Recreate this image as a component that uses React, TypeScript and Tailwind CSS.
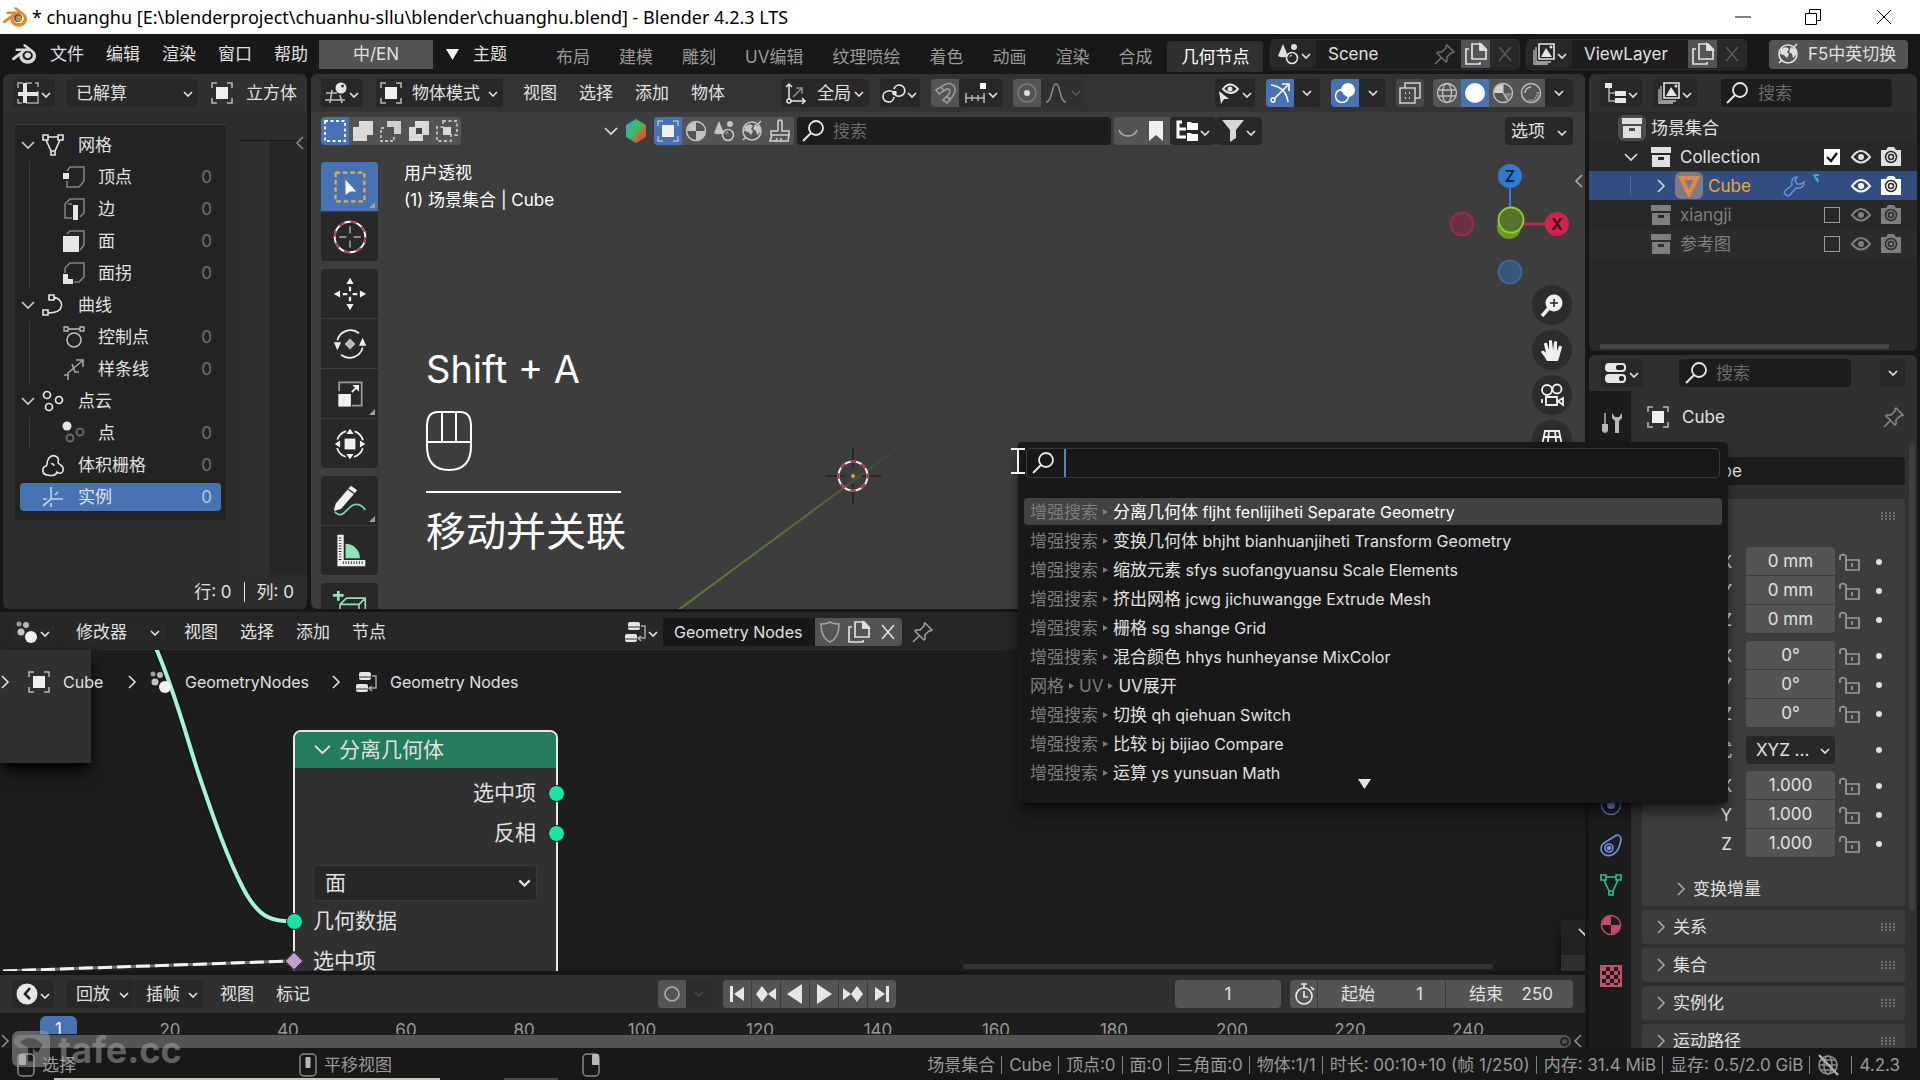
import React from "react";
import { SiBlender } from "react-icons/si";

const W = "#e6e6e6";

const ICONS: Record<string, React.ReactNode> = {
  sheet: (
    <g>
      <path d="M1 6V1h5M9 1h6M18 1h3v4M1 17v4h4M9 21h12V9" fill="none" stroke="#a8a8a8" strokeWidth="1.5" />
      <path d="M8 1v20M1 12h20" stroke={W} strokeWidth="4" />
    </g>
  ),
  object: (
    <g>
      <path d="M1 6V1h5M16 1h5v5M21 16v5h-5M6 21H1v-5" fill="none" stroke="#b8b8b8" strokeWidth="1.5" />
      <rect x="5" y="5" width="12" height="12" fill="#f0f0f0" />
    </g>
  ),
  view3d: (
    <g>
      <path d="M1 11h11M0 18h20M7 8l-2 13M15 13l2 8" fill="none" stroke="#bdbdbd" strokeWidth="1.6" />
      <circle cx="16" cy="6" r="5.5" fill={W} />
      <circle cx="17.500" cy="4" r="1.500" fill="#333" />
    </g>
  ),
  axes: (
    <g fill="none" stroke={W} strokeWidth="1.5">
      <path d="M4 17V2M1 5l3-3 3 3M6 19h14M17 16l3 3-3 3" />
      <circle cx="4" cy="19" r="2" />
      <path d="M8 15l8-8M11 6h6v6" stroke="#8f8f8f" />
    </g>
  ),
  pivot: (
    <g fill="none" stroke={W} strokeWidth="1.7">
      <path d="M11 7a5.500 5.500 0 1 1 6 7q-3 1-6-2M11 15a5.500 5.500 0 1 1-6-6q3-1 6 2" />
      <circle cx="11.500" cy="11" r="1.500" fill={W} />
    </g>
  ),
  magnet: (
    <path d="M2 8l8-5c5-3 11-1 11 5 0 5-4 9-8 13l-4-3c4-4 7-6 7-9 0-2-2-3-5-1l-6 4zM7 5l3 4M16 17l-4-3" fill="none" stroke="#9c9c9c" strokeWidth="1.600" />
  ),
  increment: (
    <g>
      <path d="M1 16h20M2 11v10M8 13v6M14 13v6M20 11v10" stroke="#b0b0b0" strokeWidth="1.6" />
      <rect x="16" y="1" width="6" height="6" fill="#fff" />
    </g>
  ),
  prop: (
    <g>
      <circle cx="11" cy="11" r="9" fill="none" stroke="#7a7a7a" strokeWidth="1.5" />
      <circle cx="11" cy="11" r="3" fill="#ddd" />
    </g>
  ),
  falloff: <path d="M1 20c7 0 5-18 10-18s3 18 10 18" fill="none" stroke="#8a8a8a" strokeWidth="1.6" />,
  eyecursor: (
    <g>
      <path d="M5 7q7-9 15 0q-7 8-15 0z" fill="none" stroke={W} strokeWidth="2" />
      <circle cx="12" cy="7" r="2.500" fill={W} />
      <path d="M1 9l2 13 3-5 5 0z" fill={W} />
    </g>
  ),
  gizmo: (
    <g fill="none" stroke="#fff" strokeWidth="1.6">
      <path d="M2 3q15 2 17 17M6 16L19 3M13 2h7v7" />
      <circle cx="4" cy="18" r="2" />
    </g>
  ),
  overlay: (
    <g>
      <circle cx="14" cy="8" r="7" fill="#fff" />
      <circle cx="8" cy="14" r="6.500" fill="none" stroke="#fff" strokeWidth="1.500" />
      <path d="M7.500 10a7 7 0 0 0 5 5" stroke="#4772b3" fill="none" strokeWidth="1.500" />
    </g>
  ),
  xray: (
    <g fill="none" stroke="#d0d0d0" strokeWidth="1.5">
      <path d="M6 6V1h15v15h-5" />
      <rect x="1" y="6" width="15" height="15" />
      <path d="M6 11h1M10 11h1M6 16h1M10 16h1" strokeWidth="2" />
    </g>
  ),
  wire: (
    <g fill="none" stroke="#bdbdbd" strokeWidth="1.4">
      <circle cx="11" cy="11" r="9.500" />
      <ellipse cx="11" cy="11" rx="4.500" ry="9.500" />
      <path d="M2 8h18M2 14h18" />
    </g>
  ),
  solid: <circle cx="11" cy="11" r="10" fill="#fff" />,
  matprev: (
    <g>
      <circle cx="11" cy="11" r="9.500" fill="none" stroke="#bdbdbd" strokeWidth="1.500" />
      <path d="M11 11V2a9 9 0 0 0-9 9z" fill="#cfcfcf" />
      <path d="M11 11h9l-6 8z" fill="#8a8a8a" />
      <path d="M11 2v9l5 7" stroke="#cfcfcf" fill="none" />
    </g>
  ),
  rendered: (
    <g fill="none" stroke="#bdbdbd" strokeWidth="1.500">
      <circle cx="11" cy="11" r="9.500" />
      <path d="M5 11a6 6 0 0 1 6-6" />
      <path d="M18 10l-1 5-4 4-5 0" strokeDasharray="2 1" strokeWidth="3" stroke="#8f8f8f" />
    </g>
  ),
  selNew: <path d="M1 1h20v20H1z" fill="none" stroke="#fff" strokeWidth="1.8" strokeDasharray="3 2.500" />,
  selAdd: <path d="M7 1h14v14h-6v6H1V7h6z" fill="#dadada" />,
  selSub: (
    <g>
      <path d="M7 1h14v13h-7V7H7z" fill="#cfcfcf" />
      <path d="M4 8H1v13h13v-4" fill="none" stroke="#bdbdbd" strokeWidth="1.800" strokeDasharray="3 2" />
    </g>
  ),
  selInv: (
    <g>
      <path d="M7 1h14v14h-6v6H1V7h6z" fill="#dadada" />
      <rect x="8" y="8" width="6" height="6" fill="#444" />
    </g>
  ),
  selInt: (
    <g>
      <path d="M7 1h14v14h-6v6H1V7h6z" fill="none" stroke="#bdbdbd" strokeWidth="1.800" strokeDasharray="3 2.500" />
      <rect x="7" y="7" width="8" height="8" fill="#dadada" />
    </g>
  ),
  material: (
    <g>
      <circle cx="11" cy="11" r="9.500" fill="none" stroke="currentColor" strokeWidth="1.500" />
      <path d="M11 11V2a9 9 0 0 0-9 9zM11 11h9a9 9 0 0 1-9 9z" fill="currentColor" />
    </g>
  ),
  scene: (
    <g>
      <path d="M6 1l5 12a6 3 0 0 1-10 0z" fill="currentColor" />
      <circle cx="17" cy="4" r="3" fill="currentColor" />
      <circle cx="15" cy="15" r="5.500" fill="none" stroke="currentColor" strokeWidth="1.600" />
      <path d="M13 14a2 2 0 0 1 2-2" stroke="currentColor" fill="none" />
    </g>
  ),
  world: (
    <g>
      <circle cx="11" cy="11" r="9" fill="none" stroke="currentColor" strokeWidth="1.600" />
      <path d="M4 6l5-2 3 2-2 3 2 2-2 4-3-3-4-1zM14 4l5 3 0 5-3 3-1-4-3-2z" fill="currentColor" />
      <path d="M17 4l3-3M2 20l3-3" stroke="currentColor" strokeWidth="1.600" />
    </g>
  ),
  brush: (
    <path d="M9 11V2a2 2 0 0 1 4 0v9h7v4H2v-4h7M3 15l-2 6h18l1-6M7 21l1-3M12 21v-3" fill="none" stroke="#cfcfcf" strokeWidth="1.600" />
  ),
  search: (
    <g fill="none" stroke={W} strokeWidth="1.800">
      <circle cx="14" cy="8" r="7" />
      <path d="M9 13l-8 8" strokeWidth="2" />
    </g>
  ),
  arc: <path d="M2 10c3 8 15 8 18 0" fill="none" stroke="#b0b0b0" strokeWidth="1.600" />,
  bookmark: <path d="M4 1h14v20l-7-6-7 6z" fill="#f0f0f0" />,
  treewhite: (
    <g>
      <path d="M6 2H2v15h8M2 9h8" fill="none" stroke="#fff" strokeWidth="3" />
      <path d="M11 2h4l1 1h6v7H11zM11 13h4l1 1h6v7H11z" fill="#fff" />
    </g>
  ),
  funnel: <path d="M0 0h22l-8 10v8l-6 4V10z" fill="#d6d6d6" />,
  outliner: (
    <g>
      <path d="M5 4v15h6M5 11h6" fill="none" stroke="#a8a8a8" strokeWidth="1.600" />
      <path d="M1 1h7v5H1zM11 9h11v5H11zM11 16h11v5H11z" fill={W} />
    </g>
  ),
  layers: (
    <g>
      <path d="M6 1h15v15H6z" fill="none" stroke={W} strokeWidth="1.600" />
      <path d="M3 4v15h15M1 7v14h14" fill="none" stroke="#bdbdbd" strokeWidth="1.300" />
      <path d="M8 14l5-9 6 9z" fill={W} />
      <circle cx="18" cy="4" r="1.500" fill={W} />
    </g>
  ),
  copy: (
    <g fill="none" stroke="currentColor" strokeWidth="1.700">
      <path d="M7 1h9l5 5v10H7zM15 2v5h5" />
      <path d="M4 6H1v15h14v-2" />
      <path d="M15 1l6 6h-6z" fill="currentColor" />
    </g>
  ),
  pin: (
    <path d="M13 2l7 7-2 1-1 0-4 4v4l-1 1-9-9 1-1h4l4-4V3zM7 15l-6 6" fill="none" stroke="currentColor" strokeWidth="1.500" />
  ),
  close: <path d="M5 4l12 14M17 4L5 18" stroke="currentColor" strokeWidth="1.600" />,
  collection: (
    <g fill="currentColor">
      <path d="M1 1h20v6H1z" />
      <path d="M2 9h18v12H2zM8 11v3h6v-3z" fillRule="evenodd" />
    </g>
  ),
  eye: (
    <g>
      <path d="M2 11q9-12 18 0q-9 11-18 0z" fill="none" stroke="currentColor" strokeWidth="2" />
      <circle cx="11" cy="11" r="3" fill="currentColor" />
    </g>
  ),
  camera: (
    <g>
      <path d="M1 4h5l2-3h6l2 3h5v16H1z" fill="currentColor" />
      <circle cx="11" cy="11" r="5.500" fill="none" stroke="#2b2b2b" strokeWidth="1.500" />
      <circle cx="11" cy="11" r="2.500" fill="none" stroke="#2b2b2b" strokeWidth="1.500" />
    </g>
  ),
  wrench: (
    <path d="M14 2l-2 4 2 3 4 0 3-2c0 5-4 7-8 6l-6 7c-3 2-7-1-5-4l7-6c-1-5 1-8 5-8z" fill="none" stroke="currentColor" strokeWidth="1.600" />
  ),
  mesh: (
    <g fill="none" stroke="currentColor" strokeWidth="1.600">
      <path d="M1 1h5v5H1zM16 1h5v5h-5zM9 17h4v4H9zM6 3h10M4 6l5 11M18 6l-5 11" />
    </g>
  ),
  vertex: (
    <g>
      <path d="M4 5l3-4h14v14l-5 6H4v-6" fill="none" stroke="#858585" strokeWidth="1.500" />
      <rect x="0" y="7" width="6" height="6" fill={W} />
    </g>
  ),
  edge: (
    <g>
      <path d="M9 20H2V6l5-5h14v14l-4 4M9 6H5" fill="none" stroke="#858585" strokeWidth="1.500" />
      <rect x="10" y="7" width="5" height="15" fill={W} />
    </g>
  ),
  face: (
    <g>
      <path d="M4 4l3-3h14v14l-4 5" fill="none" stroke="#858585" strokeWidth="1.500" />
      <rect x="0" y="6" width="16" height="16" fill={W} />
    </g>
  ),
  corner: (
    <g>
      <path d="M2 11V6l5-5h14v14l-5 5h-5" fill="none" stroke="#858585" strokeWidth="1.500" />
      <path d="M0 12h5v5h5v5H0z" fill={W} />
    </g>
  ),
  curve: (
    <g fill="none" stroke={W} strokeWidth="1.600">
      <path d="M7 1h5v5H7zM1 16h5v5H1zM12 3c11 3 11 16-6 16" />
    </g>
  ),
  ctrl: (
    <g fill="none" stroke="#bdbdbd" strokeWidth="1.600">
      <circle cx="11" cy="14" r="7" />
      <path d="M1 1h4v4H1zM17 1h4v4h-4zM5 3h12" strokeWidth="1.300" />
    </g>
  ),
  spline: <path d="M5 22v-7l14-12M13 2h7v7M1 17l5 0M9 6l3 8h4" fill="none" stroke="#a5a5a5" strokeWidth="1.600" />,
  cloud: (
    <g fill="none" stroke={W} strokeWidth="1.700">
      <circle cx="5" cy="5" r="3.500" />
      <circle cx="17" cy="10" r="3.500" />
      <circle cx="7" cy="17" r="3.500" />
    </g>
  ),
  point: (
    <g>
      <circle cx="4" cy="4" r="4.500" fill={W} />
      <circle cx="17" cy="10" r="3.500" fill="none" stroke="#6a6a6a" strokeWidth="2" />
      <circle cx="7" cy="16" r="3.500" fill="none" stroke="#6a6a6a" strokeWidth="2" />
    </g>
  ),
  volume: (
    <path d="M6 21c-6 0-7-7-2-9 2-1 0-4 3-8 4-5 11-1 9 4-1 2 4 2 5 6 1 6-4 6-6 4-1 4-6 4-9 3zM9 10c2-1 3 1 3 2" fill="none" stroke={W} strokeWidth="1.600" />
  ),
  instance: (
    <g fill="none" stroke="#b9d2f0" strokeWidth="1.700">
      <path d="M9 1v12h12M9 13l-8 7M1 13h4M13 9l3-3M9 17v4" />
    </g>
  ),
  geo: (
    <g>
      <circle cx="3" cy="3" r="2.500" fill="#9a9a9a" />
      <circle cx="10" cy="4" r="3" fill="#b8b8b8" />
      <circle cx="5" cy="11" r="3.500" fill="#c4c4c4" />
      <circle cx="15" cy="16" r="6" fill="#f2f2f2" />
    </g>
  ),
  nodetree: (
    <g>
      <rect x="4" y="1" width="12" height="8" rx="2" fill={W} />
      <rect x="1" y="13" width="12" height="8" rx="2" fill={W} />
      <path d="M4 6h12M1 18h12" stroke="#333" />
      <path d="M17 5h4v12h-6M17 15l-3 2 3 3" fill="none" stroke="#a8a8a8" strokeWidth="1.500" />
    </g>
  ),
  shield: <path d="M11 1c3 2 6 2 9 2 0 9-2 15-9 18C4 18 2 12 2 3c3 0 6 0 9-2z" fill="none" stroke="#a0a0a0" strokeWidth="1.600" />,
  clock: (
    <g>
      <circle cx="11" cy="11" r="10.500" fill={W} />
      <path d="M14 5l-5 6 5 5" fill="none" stroke="#222" strokeWidth="2.500" />
    </g>
  ),
  stopwatch: (
    <g fill="none" stroke={W} strokeWidth="1.700">
      <circle cx="11" cy="13" r="8" />
      <path d="M11 5V1M8 1h6M11 8v6h4M18 4l3 3" />
    </g>
  ),
  first: <path d="M4 3h3v16H4zM18 4v14L8 11z" fill={W} />,
  prevkey: <path d="M7 3l6 8-6 8-6-8zM21 5v12l-8-6z" fill={W} />,
  revplay: <path d="M18 1v20L3 11z" fill={W} />,
  play: <path d="M4 1v20l15-10z" fill={W} />,
  nextkey: <path d="M15 3l6 8-6 8-6-8zM1 5v12l8-6z" fill={W} />,
  last: <path d="M15 3h3v16h-3zM4 4v14l10-7z" fill={W} />,
  record: <circle cx="11" cy="11" r="7" fill="none" stroke="#a8a8a8" strokeWidth="1.700" />,
  props: (
    <g>
      <rect x="0" y="1" width="21" height="9" rx="4" fill={W} />
      <rect x="11" y="3" width="8" height="5" rx="2" fill="#222" />
      <rect x="0" y="12" width="21" height="9" rx="4" fill={W} />
      <rect x="14" y="14" width="5" height="5" rx="2" fill="#222" />
    </g>
  ),
  tools: (
    <g>
      <path d="M5 1v11" stroke="#b0b0b0" strokeWidth="1.600" />
      <path d="M2 12h6v7q-3 4-6 0z" fill="#b8b8b8" />
      <path d="M12 1v5l3 3v12h4V9l3-3V1l-3 4h-4z" fill="#b8b8b8" />
    </g>
  ),
  lock: (
    <g fill="none" stroke="#9a9a9a" strokeWidth="1.700">
      <path d="M7 9h13v10H7zM7 9V5a4 4 0 0 0-6 0v4M13 12v4" />
    </g>
  ),
  physics: (
    <g>
      <circle cx="11" cy="11" r="9.500" fill="none" stroke="#5a76c8" strokeWidth="1.600" />
      <circle cx="11" cy="11" r="4" fill="#7a93e8" />
    </g>
  ),
  constraint: (
    <g fill="none" stroke="#6f8fdc" strokeWidth="1.700">
      <path d="M2 11c3-4 8-5 13-9 3-2 6 0 6 3-1 5-1 9-5 13-8 8-18 1-14-7z" />
      <circle cx="9" cy="14" r="4" />
      <circle cx="9" cy="14" r="1.500" fill="#8fb0ff" />
    </g>
  ),
  texture: (
    <g fill="#c0506a">
      <rect x="0" y="0" width="22" height="22" />
      <path d="M2 6h4v4H2zM10 6h4v4h-4zM6 2h4v4H6zM14 2h4v4h-4zM6 10h4v4H6zM14 10h4v4h-4zM2 14h4v4H2zM10 14h4v4h-4zM18 6h2v4h-2zM18 14h2v4h-2zM6 18h4v2H6zM14 18h4v2h-4z" fill="#1c1c1c" />
    </g>
  ),
  netoff: (
    <g fill="none" stroke="#8a8a8a" strokeWidth="1.600">
      <circle cx="11" cy="11" r="9" />
      <ellipse cx="11" cy="11" rx="4" ry="9" />
      <path d="M2 11h18M3 6h16M3 16h16" />
      <path d="M2 1l19 20" strokeWidth="2.500" stroke="#b0b0b0" />
    </g>
  ),
};

function Ic({ n, className = "" }: { n: string; className?: string }) {
  return (
    <svg viewBox="0 0 22 22" className={"h-[22px] w-[22px] shrink-0 overflow-visible " + className} aria-hidden="true">
      {ICONS[n]}
    </svg>
  );
}

function Chev({ className = "" }: { className?: string }) {
  return (
    <svg viewBox="0 0 10 6" className={"h-[6px] w-[10px] shrink-0 " + className} aria-hidden="true">
      <path d="M1 1l4 4 4-4" fill="none" stroke="currentColor" strokeWidth="1.700" />
    </svg>
  );
}

function BigChev({ dir, className = "" }: { dir: "down" | "right" | "left"; className?: string }) {
  const d = { down: "M1 4l6 6 6-6", right: "M4 1l6 6-6 6", left: "M10 1L4 7l6 6" }[dir];
  return (
    <svg viewBox="0 0 14 14" className={"h-[14px] w-[14px] shrink-0 " + className} aria-hidden="true">
      <path d={d} fill="none" stroke="currentColor" strokeWidth="1.600" />
    </svg>
  );
}

function DropBtn({ n, label, className = "w-[42px]" }: { n: string; label: string; className?: string }) {
  return (
    <button aria-label={label} className={"flex h-[28px] items-center justify-center gap-[2px] rounded bg-[#282828] " + className}>
      <Ic n={n} />
      <Chev className="mt-1" />
    </button>
  );
}

function Sel({ value, label, className, pad = "pl-[10px]", icon, tone = "bg-[#282828]" }: { value: string; label: string; className: string; pad?: string; icon?: string; tone?: string }) {
  return (
    <label className={"relative flex h-[28px] items-center rounded " + tone + " " + className}>
      {icon && <Ic n={icon} className="absolute left-1" />}
      <select aria-label={label} className={"h-full w-full appearance-none bg-transparent outline-none " + pad}>
        <option>{value}</option>
      </select>
      <Chev className="pointer-events-none absolute right-[5px] top-[12px]" />
    </label>
  );
}

function Menu({ items, className = "" }: { items: string[]; className?: string }) {
  return (
    <nav className={"flex " + className}>
      {items.map((t) => (
        <button key={t} className="px-[11px] whitespace-nowrap">{t}</button>
      ))}
    </nav>
  );
}

function Tog({ n, label, tone = "bg-[#545454]", className = "w-[28px]" }: { n: string; label: string; tone?: string; className?: string }) {
  return (
    <button aria-label={label} className={"flex h-[28px] items-center justify-center " + tone + " " + className}>
      <Ic n={n} />
    </button>
  );
}

function TitleBar() {
  return (
    <header className="flex h-[34px] shrink-0 items-center bg-white text-black">
      <span className="relative ml-[3px] flex h-[22px] w-[24px] items-center">
        <span className="absolute left-[11px] top-[8px] h-[8px] w-[8px] rounded-full bg-[#1e5a94]" />
        <SiBlender className="relative h-[24px] w-[24px] text-[#e08a2a]" />
      </span>
      <h1 className="ml-[5px] font-['Noto_Sans',sans-serif] text-[18px] whitespace-pre">* chuanghu [E:\blenderproject\chuanhu-sllu\blender\chuanghu.blend] - Blender 4.2.3 LTS</h1>
      <div className="ml-auto flex">
        <button aria-label="最小化" className="flex h-[34px] w-[70px] items-center justify-center">
          <svg className="h-[16px] w-[16px]" viewBox="0 0 16 16"><path d="M0 8h16" stroke="#000" /></svg>
        </button>
        <button aria-label="还原" className="flex h-[34px] w-[70px] items-center justify-center">
          <svg className="h-[16px] w-[16px]" viewBox="0 0 16 16"><path d="M.5 4.500h11v11H.5zM4.500 4V.500h11v11H12" fill="none" stroke="#000" /></svg>
        </button>
        <button aria-label="关闭" className="flex h-[34px] w-[72px] items-center justify-center">
          <svg className="h-[16px] w-[16px]" viewBox="0 0 16 16"><path d="M1 1l14 14M15 1L1 15" stroke="#000" /></svg>
        </button>
      </div>
    </header>
  );
}

function TopBar() {
  const tabs = ["布局", "建模", "雕刻", "UV编辑", "纹理喷绘", "着色", "动画", "渲染", "合成", "几何节点"];
  return (
    <div className="flex h-[40px] shrink-0 items-center bg-[#181818]">
      <SiBlender className="ml-[12px] h-[24px] w-[24px] text-[#d8d8d8]" />
      <Menu className="ml-[3px]" items={["文件", "编辑", "渲染", "窗口", "帮助"]} />
      <button className="h-[29px] w-[114px] bg-[#545454]">中/EN</button>
      <button className="flex items-center gap-[14px] px-[13px]">
        <svg viewBox="0 0 13 11" className="h-[11px] w-[13px]"><path d="M0 0h13L6.500 11z" fill="#f0f0f0" /></svg>
        主题
      </button>
      <div className="ml-[22px] flex gap-px self-end">
        {tabs.map((t, i) => (
          <button key={t} className={"mb-[2px] h-[31px] rounded-t px-[14px] whitespace-nowrap " + (i === 9 ? "bg-[#303030] text-white" : "text-[#989898]")}>{t}</button>
        ))}
      </div>
      <div className="ml-auto flex h-[29px] w-[248px] items-center overflow-hidden rounded bg-[#1d1d1d] ring-1 ring-[#303030]">
        <DropBtn n="scene" label="浏览场景" className="w-[45px]" />
        <input aria-label="场景" defaultValue="Scene" className="min-w-0 flex-1 bg-transparent pl-[12px] outline-none" />
        <Ic n="pin" className="mr-[5px] text-[#707070]" />
        <Tog n="copy" label="新建场景" className="w-[29px]" />
        <Tog n="close" label="移除场景" tone="bg-[#282828] text-[#5a5a5a]" className="w-[29px]" />
      </div>
      <div className="ml-[8px] flex h-[29px] w-[219px] items-center overflow-hidden rounded bg-[#1d1d1d] ring-1 ring-[#303030]">
        <DropBtn n="layers" label="浏览视图层" className="w-[45px]" />
        <input aria-label="视图层" defaultValue="ViewLayer" className="min-w-0 flex-1 bg-transparent pl-[12px] outline-none" />
        <Tog n="copy" label="新建视图层" className="w-[29px]" />
        <Tog n="close" label="移除视图层" tone="bg-[#282828] text-[#5a5a5a]" className="w-[29px]" />
      </div>
      <button className="mr-[12px] ml-[23px] flex h-[29px] w-[139px] items-center gap-[9px] rounded bg-[#545454] pl-[8px] whitespace-nowrap">
        <Ic n="world" />
        F5中英切换
      </button>
    </div>
  );
}

const DOMAINS = [
  { t: "网格", i: "mesh", p: true },
  { t: "顶点", i: "vertex", c: true },
  { t: "边", i: "edge", c: true },
  { t: "面", i: "face", c: true },
  { t: "面拐", i: "corner", c: true },
  { t: "曲线", i: "curve", p: true },
  { t: "控制点", i: "ctrl", c: true },
  { t: "样条线", i: "spline", c: true },
  { t: "点云", i: "cloud", p: true },
  { t: "点", i: "point", c: true },
  { t: "体积栅格", i: "volume" },
  { t: "实例", i: "instance", s: true },
];

function Spreadsheet() {
  return (
    <section className="flex w-[304px] shrink-0 flex-col overflow-hidden rounded-md bg-[#2d2d2d]">
      <div className="flex h-[38px] shrink-0 items-center bg-[#303030] pl-[10px]">
        <DropBtn n="sheet" label="编辑器类型" />
        <Sel value="已解算" label="对象求值状态" className="ml-[11px] w-[132px]" />
        <Ic n="object" className="ml-[13px]" />
        <span className="ml-[13px]">立方体</span>
      </div>
      <div className="flex min-h-0 flex-1">
        <ul className="mt-[12px] ml-[12px] h-[396px] w-[211px] border-t border-[#3d3d3d] bg-[#232323] px-[5px] py-[4px]">
          {DOMAINS.map((d) => (
            <li key={d.t} className="flex h-[32px] items-center">
              <button className={"flex h-[28px] w-full items-center pl-[1px] " + (d.s ? "rounded bg-[#4772b3]" : "")}>
                {d.c ? (
                  <span className="ml-[8px] h-[32px] w-[34px] border-l border-[#3a3a3a]" />
                ) : (
                  <span className="flex w-[21px] text-[#cfcfcf]">{d.p && <BigChev dir="down" />}</span>
                )}
                <Ic n={d.i} className="text-[#e6e6e6]" />
                <span className={d.c ? "ml-[13px]" : "ml-[14px]"}>{d.t}</span>
                {!d.p && <span className={"mr-[9px] ml-auto " + (d.s ? "text-[#b5c8e4]" : "text-[#707070]")}>0</span>}
              </button>
            </li>
          ))}
        </ul>
        <div className="ml-[14px] flex min-w-0 flex-1 flex-col">
          <div className="h-[29px] border-b border-[#1c1c1c]" />
          <div className="relative flex flex-1">
            <div className="w-[31px] border-r border-[#202020] bg-[#303030]" />
            <div className="flex-1 bg-[#272727]" />
            <button aria-label="展开侧栏" className="absolute -top-[5px] right-0 text-[#8a8a8a]"><BigChev dir="left" className="h-[13px] w-[10px]" /></button>
          </div>
        </div>
      </div>
      <footer className="flex h-[34px] shrink-0 items-center justify-end gap-[12px] pr-[13px] whitespace-nowrap">
        <span>行: 0</span>
        <span className="h-[20px] w-px bg-[#e6e6e6]" />
        <span>列: 0</span>
      </footer>
    </section>
  );
}

function ToolIcon({ k }: { k: string }) {
  const s: Record<string, React.ReactNode> = {
    select: (
      <g>
        <path d="M4 4h32v32H4z" fill="none" stroke="#e8b04a" strokeWidth="2.500" strokeDasharray="5 3.200" />
        <path d="M15 12l12 13-7 0-5 4z" fill="#fff" />
      </g>
    ),
    cursor: (
      <g fill="none">
        <circle cx="20" cy="20" r="17" stroke="#fff" strokeWidth="2.200" />
        <circle cx="20" cy="20" r="17" stroke="#b03a52" strokeWidth="2.200" strokeDasharray="6.700 6.650" />
        <path d="M20 8v8M20 24v8M8 20h8M24 20h8" stroke="#aaa" strokeWidth="1.600" />
      </g>
    ),
    move: (
      <g fill="#f0f0f0">
        <path d="M20 2l4 7h-8zM20 38l4-7h-8zM2 20l7-4v8zM38 20l-7-4v8z" />
        <path d="M20 12v5M20 23v5M12 20h5M23 20h5" stroke="#f0f0f0" strokeWidth="2.500" />
      </g>
    ),
    rotate: (
      <g fill="none" stroke="#f0f0f0" strokeWidth="2">
        <path d="M6 16a15 15 0 0 1 24-8M34 24a15 15 0 0 1-24 8" />
        <path d="M34 13l4 9h-8zM6 27l-4-9h8z" fill="#f0f0f0" stroke="none" />
        <path d="M20 14l6 6-6 6-6-6z" fill="#bdbdbd" stroke="none" />
      </g>
    ),
    scale: (
      <g>
        <path d="M8 17V7h25v26H22" fill="none" stroke="#9a9a9a" strokeWidth="2" />
        <rect x="7" y="20" width="14" height="14" fill="#f0f0f0" />
        <path d="M22 18l5-5M25 11l4 0 0 4z" stroke="#f0f0f0" fill="#f0f0f0" strokeWidth="2" />
      </g>
    ),
    transform: (
      <g fill="#f0f0f0">
        <circle cx="20" cy="20" r="15" fill="none" stroke="#f0f0f0" strokeWidth="2" strokeDasharray="14 9.560" strokeDashoffset="-4.800" />
        <rect x="14" y="14" width="12" height="12" />
        <path d="M20 3l4 6h-8zM20 37l4-6h-8zM3 20l6-4v8zM37 20l-6-4v8z" />
      </g>
    ),
    annotate: (
      <g>
        <path d="M3 32c10 10 14-7 22-8 6-1 10 3 12 6" fill="none" stroke="#7fcfae" strokeWidth="2" />
        <path d="M21 3l7 5-18 21-8 2 2-8z" fill="#f0f0f0" />
        <path d="M18 7l7 5" stroke="#282828" strokeWidth="1.500" />
      </g>
    ),
    measure: (
      <g>
        <path d="M6 2h7v28h24v7H6z" fill="#f0f0f0" />
        <path d="M15 28V12a16 16 0 0 1 16 16z" fill="#8fe3b5" />
        <path d="M9 5v25M12 33h24" stroke="#282828" strokeWidth="3" strokeDasharray="1 2" />
      </g>
    ),
    addcube: (
      <g fill="none" stroke="#9adcb9" strokeWidth="1.800">
        <path d="M7 1v11M1 6h12" strokeWidth="3" stroke="#8fe3b5" />
        <path d="M9 16l7-7h21v20l-7 8H9zM9 16h21v21M30 16l7-7" />
      </g>
    ),
  };
  return <svg viewBox="0 0 40 40" className="h-[36px] w-[36px] overflow-visible" aria-hidden="true">{s[k]}</svg>;
}

const TOOLS: [string, string][][] = [
  [["select", "框选"], ["cursor", "游标"]],
  [["move", "移动"], ["rotate", "旋转"], ["scale", "缩放"], ["transform", "变换"]],
  [["annotate", "标注"], ["measure", "测量"]],
  [["addcube", "添加立方体"]],
];

function Viewport() {
  return (
    <section className="relative flex min-w-0 flex-1 flex-col overflow-hidden rounded-md bg-[#3d3d3d]">
      <svg className="pointer-events-none absolute top-0 left-0 h-full w-full" aria-hidden="true">
        <defs>
          <linearGradient id="axisY" gradientUnits="userSpaceOnUse" x1="366" y1="537" x2="592" y2="370">
            <stop offset="0" stopColor="#5f7c35" />
            <stop offset="0.6" stopColor="#566b3c" />
            <stop offset="1" stopColor="#3d3d3d" />
          </linearGradient>
        </defs>
        <path d="M366 537L592 370" stroke="url(#axisY)" strokeWidth="2" />
        <g fill="none">
          <path d="M542 374v20M542 410v20M514 402h20M550 402h20" stroke="#161616" strokeWidth="1.200" />
          <circle cx="542" cy="402" r="14.500" stroke="#f0f0f0" strokeWidth="2" />
          <circle cx="542" cy="402" r="14.500" stroke="#b3264a" strokeWidth="2" strokeDasharray="5.700 5.690" strokeDashoffset="3" />
          <circle cx="542" cy="402" r="2" fill="#d9a03a" />
        </g>
      </svg>
      <div className="relative flex h-[38px] shrink-0 items-center bg-[#333] pl-[10px]">
        <DropBtn n="view3d" label="编辑器类型" />
        <Sel value="物体模式" label="模式" icon="object" pad="pl-[36px]" className="ml-[13px] w-[127px]" />
        <Menu className="ml-[9px]" items={["视图", "选择", "添加", "物体"]} />
        <Sel value="全局" label="变换坐标系" icon="axes" pad="pl-[36px]" className="ml-[45px] w-[88px]" />
        <DropBtn n="pivot" label="轴心点" className="ml-[11px] w-[40px]" />
        <div className="ml-[11px] flex overflow-hidden rounded">
          <Tog n="magnet" label="吸附" />
          <DropBtn n="increment" label="吸附到" className="w-[44px]" />
        </div>
        <div className="ml-[10px] flex overflow-hidden rounded">
          <Tog n="prop" label="比例编辑" />
          <button aria-label="衰减" className="flex w-[44px] items-center justify-center gap-1 bg-[#303030] text-[#555]"><Ic n="falloff" /><Chev /></button>
        </div>
        <div className="ml-auto flex items-center pr-[12px]">
          <DropBtn n="eyecursor" label="可见性" className="w-[40px]" />
          <div className="ml-[11px] flex overflow-hidden rounded bg-[#282828]">
            <Tog n="gizmo" label="显示控件" tone="bg-[#4772b3]" />
            <button aria-label="控件选项" className="flex w-[26px] items-center justify-center"><Chev /></button>
          </div>
          <div className="ml-[11px] flex overflow-hidden rounded bg-[#282828]">
            <Tog n="overlay" label="显示叠加层" tone="bg-[#4772b3]" />
            <button aria-label="叠加层选项" className="flex w-[27px] items-center justify-center"><Chev /></button>
          </div>
          <Tog n="xray" label="透视模式" tone="ml-[10px] rounded bg-[#484848]" />
          <div className="ml-[9px] flex overflow-hidden rounded bg-[#282828]">
            <Tog n="wire" label="线框" />
            <Tog n="solid" label="实体" tone="bg-[#4772b3]" />
            <Tog n="matprev" label="材质预览" />
            <Tog n="rendered" label="渲染" />
            <button aria-label="着色选项" className="flex w-[28px] items-center justify-center"><Chev /></button>
          </div>
        </div>
      </div>
      <div className="relative flex h-[38px] shrink-0 items-center pl-[10px]">
        <div className="flex overflow-hidden rounded">
          <Tog n="selNew" label="新选择" tone="bg-[#4772b3]" />
          <Tog n="selAdd" label="扩展选择" />
          <Tog n="selSub" label="减去选择" />
          <Tog n="selInv" label="反转选择" />
          <Tog n="selInt" label="相交选择" />
        </div>
        <button aria-label="展开" className="ml-[136px] flex w-[28px] justify-center"><BigChev dir="down" /></button>
        <svg viewBox="0 0 22 24" className="h-[24px] w-[22px]" aria-hidden="true">
          <defs>
            <linearGradient id="hex" x1="0" y1="0" x2="1" y2="1">
              <stop offset="0" stopColor="#2fb0d8" />
              <stop offset="0.5" stopColor="#3fba62" />
              <stop offset="0.72" stopColor="#c9622f" />
              <stop offset="1" stopColor="#e8402a" />
            </linearGradient>
          </defs>
          <path d="M11 0l10 6v12l-10 6L1 18V6z" fill="url(#hex)" />
        </svg>
        <div className="ml-[7px] flex overflow-hidden rounded text-[#c4c4c4]">
          <Tog n="object" label="物体" tone="bg-[#4772b3]" />
          <Tog n="material" label="材质" />
          <Tog n="scene" label="场景" />
          <Tog n="world" label="世界" />
          <Tog n="brush" label="笔刷" />
        </div>
        <label className="ml-[3px] flex h-[28px] w-[314px] items-center rounded bg-[#1d1d1d] pl-[5px]">
          <Ic n="search" />
          <input aria-label="搜索" placeholder="搜索" className="ml-[9px] min-w-0 flex-1 bg-transparent outline-none placeholder:text-[#6a6a6a]" />
        </label>
        <div className="ml-[3px] flex overflow-hidden rounded">
          <Tog n="arc" label="更多" />
          <Tog n="bookmark" label="书签" />
          <DropBtn n="treewhite" label="目录" className="w-[46px]" />
          <DropBtn n="funnel" label="筛选" className="w-[46px]" />
        </div>
        <button className="mr-[12px] ml-auto flex h-[28px] w-[68px] items-center justify-center gap-[12px] rounded bg-[#282828]">选项<Chev className="mt-1" /></button>
      </div>
      <div className="relative flex min-h-0 flex-1">
        <div className="ml-[10px] flex w-[57px] shrink-0 flex-col gap-[8px] pt-[12px]">
          {TOOLS.map((g, gi) => (
            <div key={gi} className="flex shrink-0 flex-col gap-px overflow-hidden rounded">
              {g.map(([k, l]) => (
                <button key={k} aria-label={l} className={"relative flex h-[49px] w-full items-center justify-center " + (k === "select" ? "bg-[#4772b3]" : "bg-[#282828]")}>
                  <ToolIcon k={k} />
                  {["select", "scale", "annotate"].includes(k) && (
                    <svg viewBox="0 0 6 6" className="absolute right-[3px] bottom-[3px] h-[6px] w-[6px]"><path d="M6 0v6H0z" fill="#a0a0a0" /></svg>
                  )}
                </button>
              ))}
            </div>
          ))}
        </div>
        <div className="ml-[26px] flex flex-1 flex-col pt-[10px] text-white">
          <p className="leading-[27px]">用户透视</p>
          <p className="leading-[27px]">(1) 场景集合 | Cube</p>
          <div className="mt-[130px] ml-[22px] w-[200px]">
            <p className="text-[38px] leading-[50px] whitespace-nowrap">Shift + A</p>
            <svg viewBox="0 0 46 60" className="mt-[17px] h-[60px] w-[46px]" aria-hidden="true">
              <path d="M1 15Q1 1 12 1h22q11 0 11 14v20q0 24-22 24T1 35zM1 31h44M16 1v30M30 1v30" fill="none" stroke="#fff" strokeWidth="2" />
            </svg>
            <hr className="mt-[20px] w-[195px] border-t-2 border-white" />
            <p className="mt-[14px] text-[40px] leading-[50px] whitespace-nowrap">移动并关联</p>
          </div>
        </div>
        <div className="flex flex-col items-end pr-[13px]">
          <svg viewBox="0 0 127 135" className="h-[135px] w-[127px]" aria-hidden="true">
            <path d="M65 38v22" stroke="#3b7dc9" strokeWidth="2" />
            <path d="M78 74h26" stroke="#c4234e" strokeWidth="3" />
            <circle cx="65" cy="26" r="12" fill="#2f7ad1" />
            <circle cx="112" cy="74" r="12" fill="#d0224f" />
            <circle cx="17" cy="74" r="11.500" fill="#6b3143" stroke="#a32a4a" strokeWidth="1.500" />
            <circle cx="65" cy="122" r="11.500" fill="#38567c" stroke="#3b6ea8" strokeWidth="1.500" />
            <circle cx="64" cy="77" r="12" fill="#6a9a1f" />
            <circle cx="66" cy="70" r="12.500" fill="#57722b" stroke="#8fd42c" strokeWidth="1.800" />
            <text x="65" y="32" textAnchor="middle" fontSize="16" fontWeight="600" fill="#0d1d33">Z</text>
            <text x="112" y="80" textAnchor="middle" fontSize="16" fontWeight="600" fill="#33060f">X</text>
          </svg>
          <div className="flex flex-col gap-[5px]">
            <NavBtn label="缩放视图">
              <circle cx="14" cy="10" r="8.500" fill="#f0f0f0" />
              <path d="M9 15l-7 8" stroke="#f0f0f0" strokeWidth="3.500" />
              <path d="M14 6v8M10 10h8" stroke="#222" strokeWidth="1.500" />
            </NavBtn>
            <NavBtn label="平移视图">
              <path d="M7 23q-2-4-6-9 1-2 3-1l2 2-2-9q1-2 3-1l2 7 0-9q1-2 3 0l1 9 1-8q2-2 3 0l0 9 2-5q2-1 3 1-2 8-4 14z" fill="#f0f0f0" />
            </NavBtn>
            <NavBtn label="摄像机视图">
              <g fill="none" stroke="#f0f0f0" strokeWidth="1.800">
                <circle cx="7" cy="7" r="5" /><circle cx="17" cy="6" r="4.500" />
                <path d="M6 14h11v8H6zM2 16v4M18 18l5-3v7z" />
              </g>
            </NavBtn>
            <NavBtn label="透视/正交">
              <path d="M5 3h14l4 19H1zM3 9h18M2 15h20M9 3L7 22M15 3l2 19" fill="none" stroke="#f0f0f0" strokeWidth="1.800" />
            </NavBtn>
          </div>
        </div>
        <button aria-label="展开侧栏" className="absolute top-[24px] right-[-1px] text-[#b0b0b0]"><BigChev dir="left" /></button>
      </div>
    </section>
  );
}

function NavBtn({ label, children }: { label: string; children: React.ReactNode }) {
  return (
    <button aria-label={label} className="flex h-[40px] w-[40px] items-center justify-center rounded-full bg-[#2c2c2c]">
      <svg viewBox="0 0 24 24" className="h-[24px] w-[24px]">{children}</svg>
    </button>
  );
}

function NodeEditor() {
  return (
    <section className="flex h-[359px] shrink-0 flex-col overflow-hidden bg-[#1d1d1d]">
      <div className="flex h-[38px] shrink-0 items-center bg-[#262626] pt-px pl-[12px]">
        <DropBtn n="geo" label="编辑器类型" />
        <Sel value="修改器" label="几何节点类型" className="ml-[12px] w-[99px]" />
        <Menu className="ml-[8px]" items={["视图", "选择", "添加", "节点"]} />
        <div className="ml-[221px] flex items-center overflow-hidden rounded">
          <DropBtn n="nodetree" label="浏览节点树" className="w-[45px]" />
          <input aria-label="节点树" defaultValue="Geometry Nodes" className="h-[28px] w-[152px] bg-[#181818] pl-[11px] text-[16px] outline-none" />
          <Tog n="shield" label="伪用户" className="w-[29px]" />
          <Tog n="copy" label="新建" className="w-[29px]" />
          <Tog n="close" label="断开" className="w-[29px]" />
        </div>
        <button aria-label="固定" className="ml-[10px] text-[#a0a0a0]"><Ic n="pin" /></button>
      </div>
      <div className="relative min-h-0 flex-1">
        <div className="absolute top-0 left-0 h-[113px] w-[91px] bg-[#303030] shadow-lg shadow-black" />
        <svg className="pointer-events-none absolute top-0 left-0 h-full w-full" aria-hidden="true">
          <path d="M156 -2C178 50 187 90 200 128S226 205 243 238S275 271 292 271" fill="none" stroke="#0f1a16" strokeWidth="7" />
          <path d="M156 -2C178 50 187 90 200 128S226 205 243 238S275 271 292 271" fill="none" stroke="#a9f2da" strokeWidth="4" />
          <path d="M3 321L290 311" stroke="#6d6d6d" strokeWidth="3" />
          <path d="M3 321L290 311" stroke="#f2f2f2" strokeWidth="3" strokeDasharray="14 5" />
        </svg>
        <nav className="relative flex h-[64px] items-center text-[16px] text-[#e0e0e0]">
          <BigChev dir="right" className="-ml-[2px]" />
          <Ic n="object" className="ml-[16px]" />
          <span className="ml-[13px] w-[41px]">Cube</span>
          <BigChev dir="right" className="ml-[21px]" />
          <Ic n="geo" className="ml-[11px]" />
          <span className="ml-[13px]">GeometryNodes</span>
          <BigChev dir="right" className="ml-[20px]" />
          <Ic n="nodetree" className="ml-[12px]" />
          <span className="ml-[13px]">Geometry Nodes</span>
        </nav>
        <article className="absolute top-[80px] left-[293px] w-[265px] rounded-t-lg border-2 border-[#e8e8e8] bg-[#303030] pb-10 text-[21px]">
          <h2 className="flex h-[36px] items-center gap-[8px] rounded-t-md bg-[#247c5c] pb-px pl-[19px]"><BigChev dir="down" className="h-[17px] w-[17px]" />分离几何体</h2>
          <div className="mt-[9px] flex h-[32px] items-center justify-end pr-[20px]">选中项</div>
          <div className="mt-[8px] flex h-[32px] items-center justify-end pr-[20px]">反相</div>
          <label className="relative mt-[16px] mr-[19px] ml-[18px] flex h-[36px] items-center rounded border border-[#3a3a3a] bg-[#272727]">
            <select aria-label="域" className="h-full w-full appearance-none bg-transparent pl-[11px] outline-none"><option>面</option></select>
            <Chev className="pointer-events-none absolute right-[5px] h-[8px] w-[13px]" />
          </label>
          <div className="mt-[4px] flex h-[32px] items-center pl-[18px]">几何数据</div>
          <div className="mt-[8px] flex h-[32px] items-center pl-[18px]">选中项</div>
          <i className="absolute top-[53px] -right-[9px] h-[17px] w-[17px] rounded-full border border-[#141414] bg-[#18e5a5]" />
          <i className="absolute top-[93px] -right-[9px] h-[17px] w-[17px] rounded-full border border-[#141414] bg-[#18e5a5]" />
          <i className="absolute top-[181px] -left-[9px] h-[17px] w-[17px] rounded-full border border-[#141414] bg-[#18e5a5]" />
          <i className="absolute top-[222px] -left-[8px] h-[14px] w-[14px] rotate-45 border border-[#141414] bg-[#c0a0cf]" />
        </article>
        <div className="absolute right-0 bottom-0 h-[51px] w-[24px] border-b-[16px] border-[#303030] bg-[#222] shadow-lg shadow-black">
          <BigChev dir="down" className="ml-[17px] mt-[5px]" />
        </div>
        <div className="absolute bottom-[2px] left-[963px] h-[5px] w-[530px] rounded bg-[#333]" />
      </div>
    </section>
  );
}

function Timeline() {
  const frames = [20, 40, 60, 80, 100, 120, 140, 160, 180, 200, 220, 240];
  return (
    <section className="flex h-[73px] shrink-0 flex-col overflow-hidden bg-[#1d1d1d]">
      <div className="flex h-[38px] shrink-0 items-center bg-[#303030] pl-[12px]">
        <DropBtn n="clock" label="编辑器类型" />
        <div className="ml-[12px] flex gap-px">
          <Sel value="回放" label="回放" className="w-[68px]" />
          <Sel value="插帧" label="插帧" pad="pl-[11px]" className="w-[68px]" />
        </div>
        <Menu className="ml-[6px]" items={["视图", "标记"]} />
        <div className="ml-[337px] flex overflow-hidden rounded">
          <Tog n="record" label="自动插帧" />
          <button aria-label="自动插帧选项" className="flex w-[26px] items-center justify-center bg-[#2c2c2c] text-[#484848]"><Chev /></button>
        </div>
        <div className="ml-[11px] flex gap-px overflow-hidden rounded bg-[#3c3c3c]">
          <Tog n="first" label="跳到首帧" />
          <Tog n="prevkey" label="上一关键帧" />
          <Tog n="revplay" label="倒放" />
          <Tog n="play" label="播放" />
          <Tog n="nextkey" label="下一关键帧" />
          <Tog n="last" label="跳到末帧" />
        </div>
        <input aria-label="当前帧" defaultValue="1" className="ml-auto h-[28px] w-[106px] rounded bg-[#545454] text-center outline-none" />
        <div className="mr-[12px] ml-[9px] flex h-[28px] gap-px overflow-hidden rounded bg-[#3c3c3c]">
          <Tog n="stopwatch" label="预览范围" className="w-[27px]" />
          <label className="flex w-[127px] items-center bg-[#545454] pr-[22px] pl-[23px]">起始<input defaultValue="1" className="w-0 flex-1 bg-transparent text-right outline-none" /></label>
          <label className="flex w-[127px] items-center bg-[#545454] pr-[20px] pl-[23px]">结束<input defaultValue="250" className="w-0 flex-1 bg-transparent text-right outline-none" /></label>
        </div>
      </div>
      <div className="flex h-[21px] shrink-0 items-start overflow-hidden text-[#989898]">
        <span className="mt-[3px] ml-[40px] h-[30px] w-[37px] rounded-md bg-[#4772b3] text-center leading-[27px] text-white">1</span>
        <div className="ml-[34px] flex">
          {frames.map((f) => (
            <span key={f} className="w-[118px] shrink-0 pt-[5px] text-center leading-[24px]">{f}</span>
          ))}
        </div>
      </div>
      <div className="flex h-[14px] items-center text-[#8a8a8a]">
        <BigChev dir="right" className="-ml-[2px]" />
        <div className="ml-[2px] flex h-[13px] flex-1 items-center justify-end rounded-full bg-[#545454] pr-[2px]"><span className="h-[9px] w-[9px] rounded-full border-2 border-[#222]" /></div>
        <BigChev dir="left" />
      </div>
    </section>
  );
}

function OutRow({ kind, name }: { kind: "on" | "off"; name: string }) {
  const c = kind === "on" ? "text-[#e0e0e0]" : "text-[#7e7e7e]";
  return (
    <li className={"flex h-[29px] items-center pr-[15px] " + c + (kind === "on" ? "" : " odd:bg-[#2b2b2b]")}>
      <span className="ml-[35px] flex w-[26px]">{kind === "on" && <BigChev dir="down" />}</span>
      <Ic n="collection" />
      <span className="ml-[8px] flex-1">{name}</span>
      <Toggles c={c} on={kind === "on"} name={name} />
    </li>
  );
}

function Toggles({ c, on, name, noCheck }: { c: string; on?: boolean; name: string; noCheck?: boolean }) {
  return (
    <div className={"flex items-center " + c}>
      {!noCheck && (
        <label className="relative flex">
          <input type="checkbox" aria-label={"启用 " + name} defaultChecked={on} className="h-[16px] w-[16px] appearance-none border border-[#9a9a9a] checked:border-white checked:bg-white" />
          {on && <svg viewBox="0 0 16 16" className="pointer-events-none absolute top-0 left-0 h-[16px] w-[16px]"><path d="M3 8l4 4 6-8" fill="none" stroke="#111" strokeWidth="2.200" /></svg>}
        </label>
      )}
      <button aria-label="隐藏" className="ml-[10px]"><Ic n="eye" className="h-[20px] w-[20px]" /></button>
      <button aria-label="渲染可见" className="ml-[8px]"><Ic n="camera" className="h-[20px] w-[20px]" /></button>
    </div>
  );
}

function Outliner() {
  return (
    <section className="flex h-[277px] shrink-0 flex-col overflow-hidden rounded-md bg-[#282828]">
      <div className="flex h-[38px] shrink-0 items-center bg-[#303030] pl-[11px]">
        <DropBtn n="outliner" label="编辑器类型" />
        <DropBtn n="layers" label="显示模式" className="ml-[11px] w-[44px]" />
        <label className="ml-[24px] flex h-[28px] w-[171px] items-center rounded bg-[#1d1d1d] pl-[5px]">
          <Ic n="search" />
          <input aria-label="搜索大纲" placeholder="搜索" className="ml-[10px] w-0 flex-1 bg-transparent outline-none placeholder:text-[#6a6a6a]" />
        </label>
      </div>
      <ul className="flex-1 pt-[1px]">
        <li className="flex h-[29px] items-center bg-[#2b2b2b] pl-[29px]">
          <span className="flex h-[26px] w-[28px] items-center justify-center rounded-md bg-[#4c4c4c]"><Ic n="collection" className="h-[20px] w-[20px] text-[#e0e0e0]" /></span>
          <span className="ml-[5px]">场景集合</span>
        </li>
        <OutRow kind="on" name="Collection" />
        <li className="flex h-[29px] items-center bg-[#334d80] pr-[15px]">
          <span className="ml-[41px] h-[18px] w-[24px] border-l border-[#5a7099]" />
          <BigChev dir="right" className="text-[#c8d4ea]" />
          <span className="ml-[7px] flex h-[27px] w-[28px] items-center justify-center rounded-md bg-[#7f7a86]">
            <svg viewBox="0 0 22 22" className="h-[22px] w-[22px]"><path d="M3 3h16l-8 16z" fill="none" stroke="#e08a4a" strokeWidth="4" /></svg>
          </span>
          <span className="ml-[5px] flex-1 text-[#f0a63a]">Cube</span>
          <Ic n="wrench" className="text-[#5f8fe0]" />
          <svg viewBox="0 0 8 10" className="mr-[20px] mb-[14px] ml-[8px] h-[9px] w-[7px]"><path d="M1 1h6M1 1l5 8M2 5h4" stroke="#35b7c4" strokeWidth="2" fill="none" /></svg>
          <Toggles c="text-white" name="Cube" noCheck />
        </li>
        <OutRow kind="off" name="xiangji" />
        <OutRow kind="off" name="参考图" />
      </ul>
      <div className="mr-[28px] mb-[2px] ml-[11px] h-[5px] bg-[#444]" />
    </section>
  );
}

function FieldGroup({ rows }: { rows: [string, string][] }) {
  return (
    <div className="mb-[7px]">
      {rows.map(([l, v], i) => (
        <div key={i} className="flex h-[29px] items-center pr-[12px]">
          <label className="flex h-full flex-1 items-center justify-end">
            <span className="mr-[14px] whitespace-nowrap">{l}</span>
            <input defaultValue={v} className={"h-full w-[89px] border-b border-[#3d3d3d] bg-[#545454] text-center outline-none " + (i === 0 ? "rounded-t" : i === 2 ? "rounded-b" : "")} />
          </label>
          <button aria-label={"锁定 " + l} className="flex w-[30px] justify-center"><Ic n="lock" className="h-[20px] w-[20px]" /></button>
          <Dot />
        </div>
      ))}
    </div>
  );
}

function Dot() {
  return <span className="flex w-[28px] justify-center"><i className="h-[6px] w-[6px] rounded-full bg-[#e0e0e0]" /></span>;
}

function Grip() {
  return (
    <svg viewBox="0 0 15 8" className="h-[8px] w-[15px]" aria-hidden="true">
      <path d="M0 1h15M0 4h15M0 7h15" stroke="#a0a0a0" strokeWidth="1" strokeDasharray="2 2" />
    </svg>
  );
}

function PropTab({ n, label, className = "" }: { n: string; label: string; className?: string }) {
  return <button aria-label={label} className={"flex h-[40px] w-full shrink-0 items-center justify-center " + className}><Ic n={n} /></button>;
}

function Properties() {
  return (
    <section className="flex min-h-0 flex-1 flex-col overflow-hidden rounded-t-md bg-[#303030]">
      <div className="flex h-[36px] shrink-0 items-center pl-[12px]">
        <DropBtn n="props" label="编辑器类型" />
        <label className="ml-[36px] flex h-[28px] w-[172px] items-center rounded bg-[#1d1d1d] pl-[6px]">
          <Ic n="search" />
          <input aria-label="搜索属性" placeholder="搜索" className="ml-[9px] w-0 flex-1 bg-transparent outline-none placeholder:text-[#6a6a6a]" />
        </label>
        <button aria-label="选项" className="mr-[12px] ml-auto flex h-[28px] w-[25px] items-center justify-center rounded bg-[#282828]"><Chev /></button>
      </div>
      <div className="flex min-h-0 flex-1">
        <nav className="flex w-[42px] shrink-0 flex-col overflow-hidden bg-[#1c1c1c] pt-[12px] pl-px">
          <PropTab n="tools" label="工具" />
          <div className="mt-[11px]">
            <PropTab n="camera" label="渲染" />
            <PropTab n="layers" label="输出" />
            <PropTab n="layers" label="视图层" />
            <PropTab n="scene" label="场景" />
            <PropTab n="world" label="世界" />
            <PropTab n="object" label="物体" />
            <PropTab n="wrench" label="修改器" />
            <PropTab n="cloud" label="粒子" />
          </div>
          <PropTab n="physics" label="物理" className="mt-[11px]" />
          <PropTab n="constraint" label="约束" />
          <PropTab n="mesh" label="数据" className="text-[#2cc295]" />
          <PropTab n="material" label="材质" className="text-[#c0506a]" />
          <PropTab n="texture" label="纹理" className="mt-[11px]" />
        </nav>
        <div className="flex min-w-0 flex-1 flex-col overflow-hidden pl-[11px]">
          <div className="flex h-[52px] shrink-0 items-center pr-[12px] pl-[5px]">
            <Ic n="object" />
            <span className="ml-[13px] flex-1">Cube</span>
            <button aria-label="固定" className="text-[#8a8a8a]"><Ic n="pin" /></button>
          </div>
          <div className="flex min-h-0 flex-1 gap-[4px] pr-[2px]">
            <div className="flex min-w-0 flex-1 flex-col">
              <input aria-label="名称" defaultValue="Cube" className="mt-[14px] h-[28px] shrink-0 rounded bg-[#1d1d1d] pl-[57px] outline-none" />
              <div className="mt-[14px] shrink-0 rounded bg-[#3d3d3d]">
                <div className="flex h-[34px] items-center justify-between pr-[9px] pl-[11px]"><span>变换</span><Grip /></div>
                <div className="mt-[14px]">
                  <FieldGroup rows={[["位置 X", "0 mm"], ["Y", "0 mm"], ["Z", "0 mm"]]} />
                  <FieldGroup rows={[["旋转 X", "0°"], ["Y", "0°"], ["Z", "0°"]]} />
                  <div className="mb-[7px] flex h-[29px] items-center justify-end pr-[12px]">
                    <span className="mr-[14px]">模式</span>
                    <Sel value="XYZ ..." label="模式" className="w-[89px]" />
                    <span className="w-[30px]" />
                    <Dot />
                  </div>
                  <FieldGroup rows={[["缩放 X", "1.000"], ["Y", "1.000"], ["Z", "1.000"]]} />
                </div>
                <button className="flex h-[41px] items-center gap-[5px] pt-[7px] pl-[32px]"><BigChev dir="right" className="text-[#a8a8a8]" />变换增量</button>
              </div>
              {["关系", "集合", "实例化", "运动路径"].map((t) => (
                <button key={t} className="mt-[4px] flex h-[34px] shrink-0 items-center gap-[5px] rounded bg-[#3d3d3d] pr-[9px] pl-[12px] text-left">
                  <BigChev dir="right" className="text-[#a8a8a8]" />
                  <span className="flex-1">{t}</span>
                  <Grip />
                </button>
              ))}
            </div>
            <div className="h-[468px] w-[6px] rounded bg-[#3f3f3f]" />
          </div>
        </div>
      </div>
    </section>
  );
}

const RESULTS: [string[], string, string][] = [
  [["增强搜索"], "分离几何体", " fljht fenlijiheti Separate Geometry"],
  [["增强搜索"], "变换几何体", " bhjht bianhuanjiheti Transform Geometry"],
  [["增强搜索"], "缩放元素", " sfys suofangyuansu Scale Elements"],
  [["增强搜索"], "挤出网格", " jcwg jichuwangge Extrude Mesh"],
  [["增强搜索"], "栅格", " sg shange Grid"],
  [["增强搜索"], "混合颜色", " hhys hunheyanse MixColor"],
  [["网格", "UV"], "UV展开", ""],
  [["增强搜索"], "切换", " qh qiehuan Switch"],
  [["增强搜索"], "比较", " bj bijiao Compare"],
  [["增强搜索"], "运算", " ys yunsuan Math"],
];

function SearchPopup() {
  return (
    <div role="dialog" aria-label="添加搜索" className="absolute top-[442px] left-[1018px] w-[710px] rounded-sm bg-[#181818] pb-[16px] shadow-lg shadow-black/60">
      <label className="mx-[8px] mt-[6px] flex h-[30px] items-center rounded border border-[#3a3a3a] pl-[5px]">
        <Ic n="search" />
        <span className="ml-[10px] h-[28px] w-[2px] bg-[#5680c2]" />
        <input aria-label="搜索节点" className="h-full flex-1 bg-transparent outline-none" />
      </label>
      <ul className="mx-[6px] mt-[19px]">
        {RESULTS.map(([path, cjk, latin], i) => (
          <li key={cjk}>
            <button className={"flex h-[29px] w-full items-center rounded border-y border-[#181818] pl-[6px] text-left whitespace-pre " + (i === 0 ? "bg-[#424242] text-white" : "")}>
              {path.map((p) => (
                <span key={p} className="flex items-center text-[#7c7c7c]">
                  {p}
                  <svg viewBox="0 0 5 6" className="mr-[5px] ml-[5px] h-[6px] w-[5px]"><path d="M0 0l5 3-5 3z" fill="#7c7c7c" /></svg>
                </span>
              ))}
              <span>{cjk}<span className="text-[16px]">{latin}</span></span>
            </button>
          </li>
        ))}
      </ul>
      <svg viewBox="0 0 13 10" className="absolute bottom-[14px] left-[340px] h-[10px] w-[13px]"><path d="M0 0h13L6.500 10z" fill="#e6e6e6" /></svg>
      <svg viewBox="0 0 16 26" className="absolute top-[6px] left-[-8px] h-[26px] w-[16px]" aria-hidden="true">
        <path d="M1 1h14M1 25h14M8 1v24" fill="none" stroke="#f2f2f2" strokeWidth="2" />
      </svg>
    </div>
  );
}

function MouseHint({ b, t }: { b: "l" | "m" | "r"; t?: string }) {
  return (
    <span className="flex items-center gap-[7px]">
      <svg viewBox="0 0 18 24" className="h-[24px] w-[18px]" aria-hidden="true">
        <rect x="1" y="1" width="16" height="22" rx="4" fill="none" stroke="#8a8a8a" strokeWidth="1.500" />
        <rect x={b === "l" ? 2 : b === "m" ? 6.5 : 10} y={b === "m" ? 4 : 1} width={b === "m" ? 5 : 7} height="11" rx="1" fill="#b8b8b8" />
      </svg>
      {t}
    </span>
  );
}

function StatusBar() {
  const stats = ["场景集合", "Cube", "顶点:0", "面:0", "三角面:0", "物体:1/1", "时长: 00:10+10 (帧 1/250)", "内存: 31.4 MiB", "显存: 0.5/2.0 GiB"];
  return (
    <footer className="relative flex h-[32px] shrink-0 items-center bg-[#181818] pt-[2px] text-[#989898] whitespace-nowrap">
      <span className="ml-[17px] w-[282px]"><MouseHint b="l" t="选择" /></span>
      <span className="w-[283px]"><MouseHint b="m" t="平移视图" /></span>
      <MouseHint b="r" />
      <div className="mr-[20px] ml-auto flex items-center">
        {stats.map((s) => (
          <span key={s} className="flex items-center">{s}<i className="mr-[7px] ml-[6px] h-[18px] w-px bg-[#808080]" /></span>
        ))}
        <Ic n="netoff" className="h-[20px] w-[20px]" />
        <i className="mr-[7px] ml-[12px] h-[18px] w-px bg-[#808080]" />
        4.2.3
      </div>
      <div className="absolute bottom-0 left-[54px] h-[2px] w-[386px] bg-[#c9c6c2]" />
      <div className="absolute bottom-0 left-[504px] h-[2px] w-[54px] bg-[#4a4a4a]" />
      <div className="pointer-events-none absolute bottom-[12px] left-[12px] flex items-end opacity-50">
        <svg viewBox="0 0 40 38" className="h-[38px] w-[38px]"><path d="M8 0h24q8 0 8 8v22q0 8-8 8H8q-8 0-8-8V8q0-8 8-8zM8 12q12-10 24 2l-4 8h-3l-3-4v14h-5V18z" fillRule="evenodd" fill="#a8a8a8" /></svg>
        <span className="ml-[8px] text-[36px] leading-[36px] font-bold text-[#a8a8a8]">tafe.cc</span>
      </div>
    </footer>
  );
}

export default function App() {
  return (
    <div className="relative flex h-screen w-full flex-col overflow-hidden bg-[#161616] font-['Inter','Noto_Sans_CJK_SC',sans-serif] text-[17px] leading-[24px] text-[#e0e0e0]">
      <TitleBar />
      <TopBar />
      <main className="flex min-h-0 flex-1 gap-[4px] pr-[3px]">
        <div className="flex min-w-0 flex-1 flex-col">
          <div className="mb-[3px] flex min-h-0 flex-1 gap-[4px] pl-[3px]">
            <Spreadsheet />
            <Viewport />
          </div>
          <NodeEditor />
          <div className="h-[4px] shrink-0" />
          <Timeline />
        </div>
        <aside className="flex w-[328px] shrink-0 flex-col gap-[4px]">
          <Outliner />
          <Properties />
        </aside>
      </main>
      <StatusBar />
      <SearchPopup />
    </div>
  );
}
